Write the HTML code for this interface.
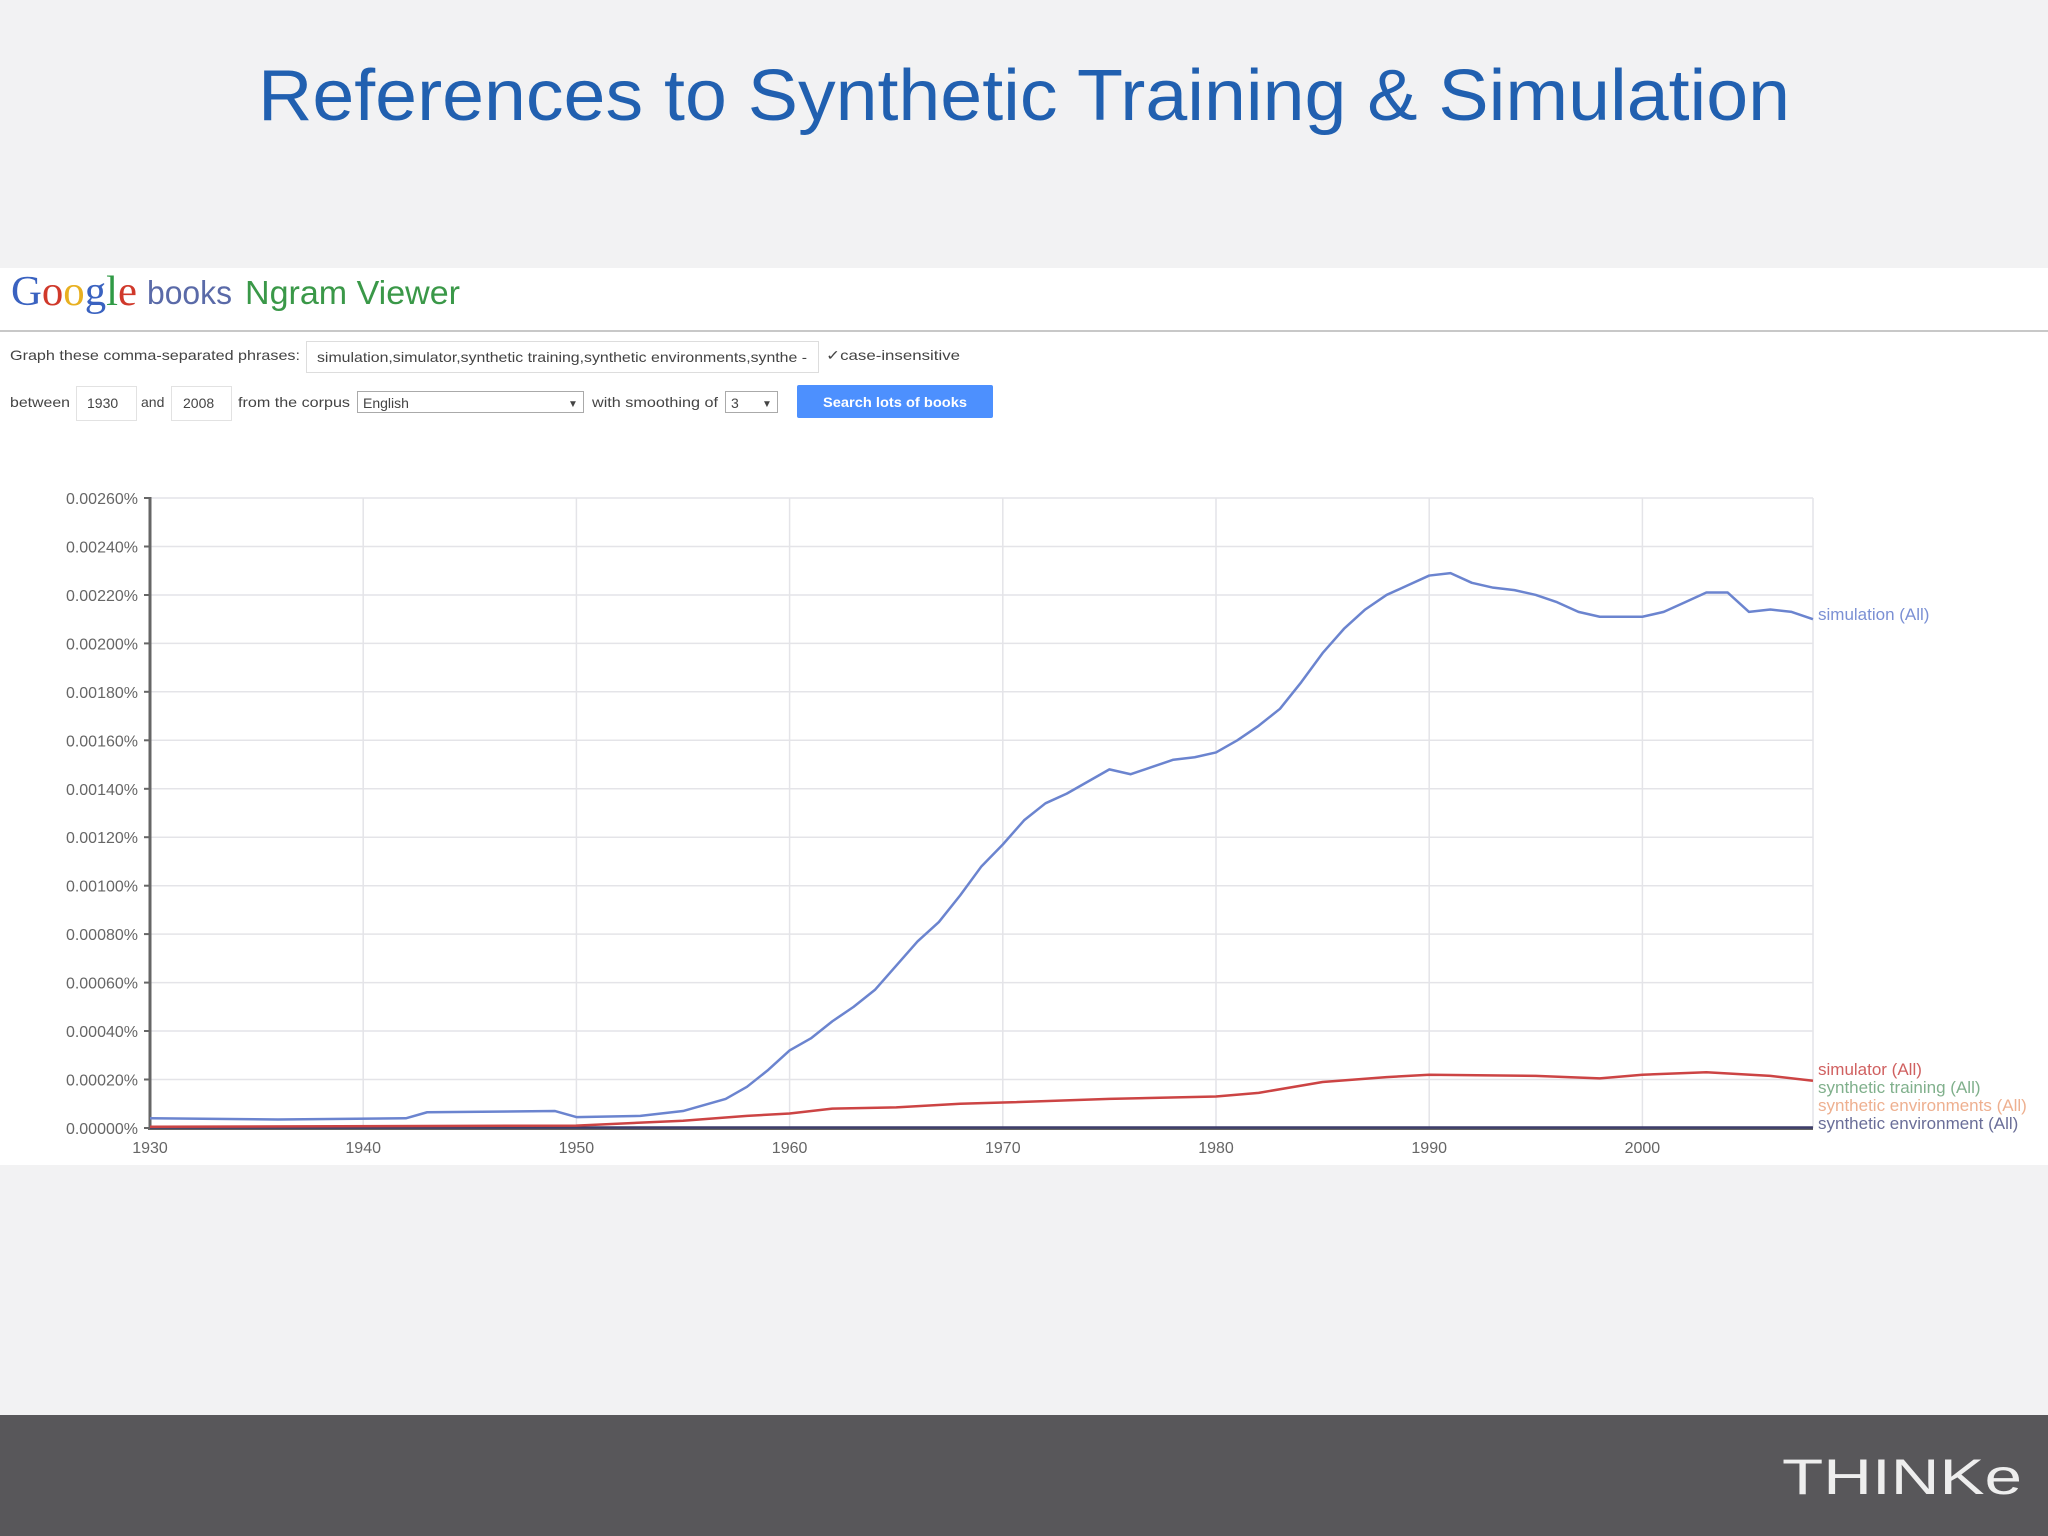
<!DOCTYPE html>
<html><head><meta charset="utf-8"><style>
html,body{margin:0;padding:0;width:2048px;height:1536px;overflow:hidden;background:#f2f2f3;font-family:"Liberation Sans",sans-serif}
</style></head><body>
<svg width="2048" height="1536" xmlns="http://www.w3.org/2000/svg" style="position:absolute;left:0;top:0;font-family:'Liberation Sans',sans-serif">
<rect width="2048" height="1536" fill="#f2f2f3"/>
<text x="258" y="120" font-size="72" fill="#2160b0" textLength="1532" lengthAdjust="spacingAndGlyphs">References to Synthetic Training &amp; Simulation</text>
<rect x="0" y="268" width="2048" height="897" fill="#ffffff"/>
<text x="11" y="305" font-family="'Liberation Serif',serif" font-size="42" textLength="126" lengthAdjust="spacingAndGlyphs"><tspan fill="#3a62c0">G</tspan><tspan fill="#d0392b">o</tspan><tspan fill="#e8b020">o</tspan><tspan fill="#3a62c0">g</tspan><tspan fill="#2f9a45">l</tspan><tspan fill="#d0392b">e</tspan></text>
<text x="147" y="304" font-size="33" fill="#5a6aa8" textLength="85" lengthAdjust="spacingAndGlyphs">books</text>
<text x="245" y="304" font-size="33" fill="#3a9848" textLength="215" lengthAdjust="spacingAndGlyphs">Ngram Viewer</text>
<rect x="0" y="330" width="2048" height="2" fill="#c8c8c8"/>
<g font-size="14" fill="#444">
<text x="10" y="360" textLength="290" lengthAdjust="spacingAndGlyphs">Graph these comma-separated phrases:</text>
<rect x="306.5" y="341.5" width="512" height="31" fill="#fff" stroke="#ddd"/>
<text x="317" y="362" textLength="490" lengthAdjust="spacingAndGlyphs">simulation,simulator,synthetic training,synthetic environments,synthe -</text>
<text x="826" y="360" textLength="134" lengthAdjust="spacingAndGlyphs">✓case-insensitive</text>
<text x="10" y="407" textLength="60" lengthAdjust="spacingAndGlyphs">between</text>
<rect x="76.5" y="386.5" width="60" height="34" fill="#fff" stroke="#e2e2e2"/>
<text x="87" y="408">1930</text>
<text x="141" y="407">and</text>
<rect x="171.5" y="386.5" width="60" height="34" fill="#fff" stroke="#e2e2e2"/>
<text x="183" y="408">2008</text>
<text x="238" y="407" textLength="112" lengthAdjust="spacingAndGlyphs">from the corpus</text>
<rect x="357.5" y="391.5" width="226" height="21" fill="#fff" stroke="#aaa"/>
<text x="363" y="408">English</text>
<text x="568" y="407" font-size="10">▼</text>
<text x="592" y="407" textLength="126" lengthAdjust="spacingAndGlyphs">with smoothing of</text>
<rect x="725.5" y="391.5" width="52" height="21" fill="#fff" stroke="#aaa"/>
<text x="731" y="408">3</text>
<text x="762" y="407" font-size="10">▼</text>
<rect x="797" y="385" width="196" height="33" rx="2" fill="#4d90fe"/>
<text x="823" y="407" fill="#fff" font-weight="bold" textLength="144" lengthAdjust="spacingAndGlyphs">Search lots of books</text>
</g>
<g stroke="#e4e4e8" stroke-width="1.5">
<line x1="150" y1="498" x2="1813" y2="498"/><line x1="150" y1="546.5" x2="1813" y2="546.5"/><line x1="150" y1="595" x2="1813" y2="595"/><line x1="150" y1="643.4" x2="1813" y2="643.4"/><line x1="150" y1="691.8" x2="1813" y2="691.8"/><line x1="150" y1="740.3" x2="1813" y2="740.3"/><line x1="150" y1="788.8" x2="1813" y2="788.8"/><line x1="150" y1="837.2" x2="1813" y2="837.2"/><line x1="150" y1="885.7" x2="1813" y2="885.7"/><line x1="150" y1="934.1" x2="1813" y2="934.1"/><line x1="150" y1="982.6" x2="1813" y2="982.6"/><line x1="150" y1="1031" x2="1813" y2="1031"/><line x1="150" y1="1079.5" x2="1813" y2="1079.5"/>
<line x1="363.2" y1="498" x2="363.2" y2="1128"/><line x1="576.4" y1="498" x2="576.4" y2="1128"/><line x1="789.6" y1="498" x2="789.6" y2="1128"/><line x1="1002.8" y1="498" x2="1002.8" y2="1128"/><line x1="1216" y1="498" x2="1216" y2="1128"/><line x1="1429.2" y1="498" x2="1429.2" y2="1128"/><line x1="1642.4" y1="498" x2="1642.4" y2="1128"/><line x1="1813" y1="498" x2="1813" y2="1128"/>
</g>
<g stroke="#666" stroke-width="3"><line x1="150" y1="497" x2="150" y2="1130"/><line x1="148" y1="1129" x2="1813" y2="1129" stroke-width="2"/></g>
<g stroke="#666" stroke-width="2">
<line x1="144" y1="498" x2="150" y2="498"/><line x1="144" y1="546.5" x2="150" y2="546.5"/><line x1="144" y1="595" x2="150" y2="595"/><line x1="144" y1="643.4" x2="150" y2="643.4"/><line x1="144" y1="691.8" x2="150" y2="691.8"/><line x1="144" y1="740.3" x2="150" y2="740.3"/><line x1="144" y1="788.8" x2="150" y2="788.8"/><line x1="144" y1="837.2" x2="150" y2="837.2"/><line x1="144" y1="885.7" x2="150" y2="885.7"/><line x1="144" y1="934.1" x2="150" y2="934.1"/><line x1="144" y1="982.6" x2="150" y2="982.6"/><line x1="144" y1="1031" x2="150" y2="1031"/><line x1="144" y1="1079.5" x2="150" y2="1079.5"/><line x1="144" y1="1128" x2="150" y2="1128"/>
</g>
<g font-size="16" fill="#666" text-anchor="end">
<text x="138" y="504">0.00260%</text><text x="138" y="552.5">0.00240%</text><text x="138" y="601">0.00220%</text><text x="138" y="649.4">0.00200%</text><text x="138" y="697.8">0.00180%</text><text x="138" y="746.3">0.00160%</text><text x="138" y="794.8">0.00140%</text><text x="138" y="843.2">0.00120%</text><text x="138" y="891.7">0.00100%</text><text x="138" y="940.1">0.00080%</text><text x="138" y="988.6">0.00060%</text><text x="138" y="1037">0.00040%</text><text x="138" y="1085.5">0.00020%</text><text x="138" y="1134">0.00000%</text>
</g>
<g font-size="16" fill="#666" text-anchor="middle">
<text x="150" y="1153">1930</text><text x="363.2" y="1153">1940</text><text x="576.4" y="1153">1950</text><text x="789.6" y="1153">1960</text><text x="1002.8" y="1153">1970</text><text x="1216" y="1153">1980</text><text x="1429.2" y="1153">1990</text><text x="1642.4" y="1153">2000</text>
</g>
<g transform="translate(150,1128) scale(21.32,-24.23) translate(-1930,0)" fill="none" stroke-linejoin="round">
<polyline vector-effect="non-scaling-stroke" stroke="#3d3d6a" stroke-width="2.5" points="1930,0.02 2008,0.02"/>
<polyline vector-effect="non-scaling-stroke" stroke="#cc4444" stroke-width="2.5" points="1930,0.05 1950,0.1 1955,0.3 1958,0.5 1960,0.6 1962,0.8 1965,0.85 1968,1.0 1970,1.05 1975,1.2 1980,1.3 1982,1.45 1985,1.9 1988,2.1 1990,2.2 1995,2.15 1998,2.05 2000,2.2 2003,2.3 2006,2.15 2008,1.95"/>
<polyline vector-effect="non-scaling-stroke" stroke="#6b84cf" stroke-width="2.5" points="1930,0.4 1936,0.35 1942,0.4 1943,0.65 1949,0.7 1950,0.45 1953,0.5 1955,0.7 1957,1.2 1958,1.7 1959,2.4 1960,3.2 1961,3.7 1962,4.4 1963,5.0 1964,5.7 1965,6.7 1966,7.7 1967,8.5 1968,9.6 1969,10.8 1970,11.7 1971,12.7 1972,13.4 1973,13.8 1974,14.3 1975,14.8 1976,14.6 1977,14.9 1978,15.2 1979,15.3 1980,15.5 1981,16.0 1982,16.6 1983,17.3 1984,18.4 1985,19.6 1986,20.6 1987,21.4 1988,22.0 1989,22.4 1990,22.8 1991,22.9 1992,22.5 1993,22.3 1994,22.2 1995,22.0 1996,21.7 1997,21.3 1998,21.1 1999,21.1 2000,21.1 2001,21.3 2002,21.7 2003,22.1 2004,22.1 2005,21.3 2006,21.4 2007,21.3 2008,21.0"/>
</g>
<g font-size="17">
<text x="1818" y="620" fill="#7b90d4">simulation (All)</text>
<text x="1818" y="1075" fill="#d06060">simulator (All)</text>
<text x="1818" y="1093" fill="#80b08c">synthetic training (All)</text>
<text x="1818" y="1111" fill="#eeb090">synthetic environments (All)</text>
<text x="1818" y="1129" fill="#6a6e98">synthetic environment (All)</text>
</g>
<rect x="0" y="1415" width="2048" height="121" fill="#58575a"/>
<text x="1782" y="1494" font-size="50" fill="#eeeeee" textLength="240" lengthAdjust="spacingAndGlyphs">THINKe</text>
</svg>
</body></html>
